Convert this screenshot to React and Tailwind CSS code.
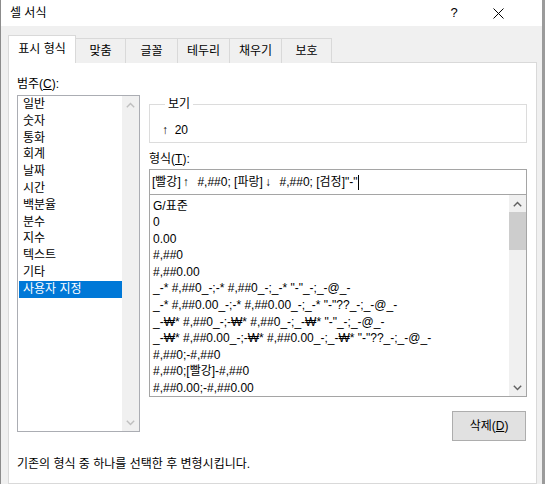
import React from "react";

const categories = [
    "일반", "숫자", "통화", "회계", "날짜", "시간",
    "백분율", "분수", "지수", "텍스트", "기타", "사용자 지정",
];

const formats = [
    "G/표준",
    "0",
    "0.00",
    "#,##0",
    "#,##0.00",
    '_-* #,##0_-;-* #,##0_-;_-* "-"_-;_-@_-',
    '_-* #,##0.00_-;-* #,##0.00_-;_-* "-"??_-;_-@_-',
    '_-₩* #,##0_-;-₩* #,##0_-;_-₩* "-"_-;_-@_-',
    '_-₩* #,##0.00_-;-₩* #,##0.00_-;_-₩* "-"??_-;_-@_-',
    "#,##0;-#,##0",
    "#,##0;[빨강]-#,##0",
    "#,##0.00;-#,##0.00",
];

const tabs = [
    { label: "표시 형식", w: "w-[68px]", active: true },
    { label: "맞춤", w: "w-[51px]" },
    { label: "글꼴", w: "w-[53px]" },
    { label: "테두리", w: "w-[53px]" },
    { label: "채우기", w: "w-[53px]" },
    { label: "보호", w: "w-[51px]" },
];

// small scrollbar chevron
const Chevron = ({ up, color }) => (
    <svg width="9" height="6" viewBox="0 0 9 6" fill="none">
        <path
            d={up ? "M0.8 5.2 L4.5 1.4 L8.2 5.2" : "M0.8 0.8 L4.5 4.6 L8.2 0.8"}
            stroke={color}
            strokeWidth="1.4"
        />
    </svg>
);

const App = () => {
    return (
        <div className="w-[545px] h-[484px] flex overflow-hidden bg-white font-['Liberation_Sans','Noto_Sans','Noto_Sans_CJK_KR',sans-serif] text-[12px] leading-[16px] text-black">
            <div className="w-[542px] h-full flex flex-col border-l border-[#8c8c8c]">
                {/* Title bar */}
                <div className="h-[26px] bg-white flex items-center pl-[9px] pr-[22px]">
                    <span>셀 서식</span>
                    <div className="ml-auto flex items-center">
                        <div className="w-[44px] flex justify-center text-[13px]">?</div>
                        <div className="w-[44px] flex justify-center">
                            <svg width="11" height="11" viewBox="0 0 11 11">
                                <path d="M0.5 0.5 L10.5 10.5 M10.5 0.5 L0.5 10.5" stroke="#000" strokeWidth="1" />
                            </svg>
                        </div>
                    </div>
                </div>

                {/* Body */}
                <div className="flex-1 flex flex-col bg-[#f0f0f0] pl-[7px] pr-[5px] pt-[9px]">
                    {/* Tabs */}
                    <div className="relative z-10 flex items-end h-[28px] -mb-px">
                        {tabs.map((t, i) => (
                            <div
                                key={i}
                                className={
                                    t.active
                                        ? `${t.w} h-[28px] flex items-center justify-center bg-white border border-b-0 border-[#d9d9d9] pb-px`
                                        : `${t.w} h-[25px] -ml-px flex items-center justify-center bg-[#f0f0f0] border border-b-0 border-[#d9d9d9]`
                                }
                            >
                                {t.label}
                            </div>
                        ))}
                    </div>

                    {/* Panel */}
                    <div className="flex-1 bg-white border border-[#d9d9d9] pl-[8px] pt-[13px]">
                        <div className="flex">
                            {/* Category column */}
                            <div className="w-[123px] flex flex-col">
                                <div>
                                    범주(<span className="underline">C</span>):
                                </div>
                                <div className="mt-[3px] h-[337px] flex border border-[#abadb3]">
                                    <div className="flex-1 pl-px">
                                        {categories.map((c, i) => (
                                            <div
                                                key={i}
                                                className={
                                                    i === categories.length - 1
                                                        ? "h-[16.8px] leading-[16.8px] pl-[4px] bg-[#0078d7] text-white"
                                                        : "h-[16.8px] leading-[16.8px] pl-[4px]"
                                                }
                                            >
                                                {c}
                                            </div>
                                        ))}
                                    </div>
                                    <div className="w-[17px] bg-[#f0f0f0] flex flex-col">
                                        <div className="h-[17px] flex items-center justify-center">
                                            <Chevron up color="#bfbfbf" />
                                        </div>
                                        <div className="flex-1" />
                                        <div className="h-[17px] flex items-center justify-center">
                                            <Chevron color="#bfbfbf" />
                                        </div>
                                    </div>
                                </div>
                            </div>

                            {/* Right column */}
                            <div className="ml-[9px] w-[378px] pt-[20px] flex flex-col">
                                <fieldset className="border border-[#dcdcdc] pl-[12px] pt-[10px] pb-[4px]">
                                    <legend className="ml-[3px] px-[3px]">보기</legend>
                                    <div className="whitespace-pre">↑  20</div>
                                </fieldset>

                                <div className="mt-[8px]">
                                    형식(<span className="underline">T</span>):
                                </div>
                                <div className="mt-[2px] h-[26px] border border-[#a5a5a5] flex items-center pl-[2px]">
                                    <span className="whitespace-pre">
                                        [빨강]<span className="mx-[2px]">↑</span>{"  "}#,##0; [파랑]<span className="mx-[2px]">↓</span>{"  "}#,##0; [검정]"-"
                                    </span>
                                    <span className="w-px h-[15px] bg-black" />
                                </div>

                                <div className="h-[202px] flex border border-t-0 border-[#a5a5a5]">
                                    <div className="flex-1 pl-[3px] pt-[2.5px] overflow-hidden">
                                        {formats.map((f, i) => (
                                            <div key={i} className="h-[16.6px] leading-[16.6px] whitespace-pre">
                                                {f}
                                            </div>
                                        ))}
                                    </div>
                                    <div className="w-[17px] bg-[#f0f0f0] flex flex-col">
                                        <div className="h-[17px] flex items-center justify-center">
                                            <Chevron up color="#606060" />
                                        </div>
                                        <div className="h-[38px] bg-[#cdcdcd]" />
                                        <div className="flex-1" />
                                        <div className="h-[17px] flex items-center justify-center">
                                            <Chevron color="#606060" />
                                        </div>
                                    </div>
                                </div>

                                <button className="mt-[14px] mr-px self-end w-[74px] h-[30px] bg-[#e1e1e1] border border-[#adadad] flex items-center justify-center">
                                    삭제(<span className="underline">D</span>)
                                </button>
                            </div>
                        </div>

                        <div className="mt-[15px]">기존의 형식 중 하나를 선택한 후 변형시킵니다.</div>
                    </div>
                </div>
            </div>
            <div className="w-[3px] h-full bg-[#9b9b9b]" />
        </div>
    );
};

export default App;
